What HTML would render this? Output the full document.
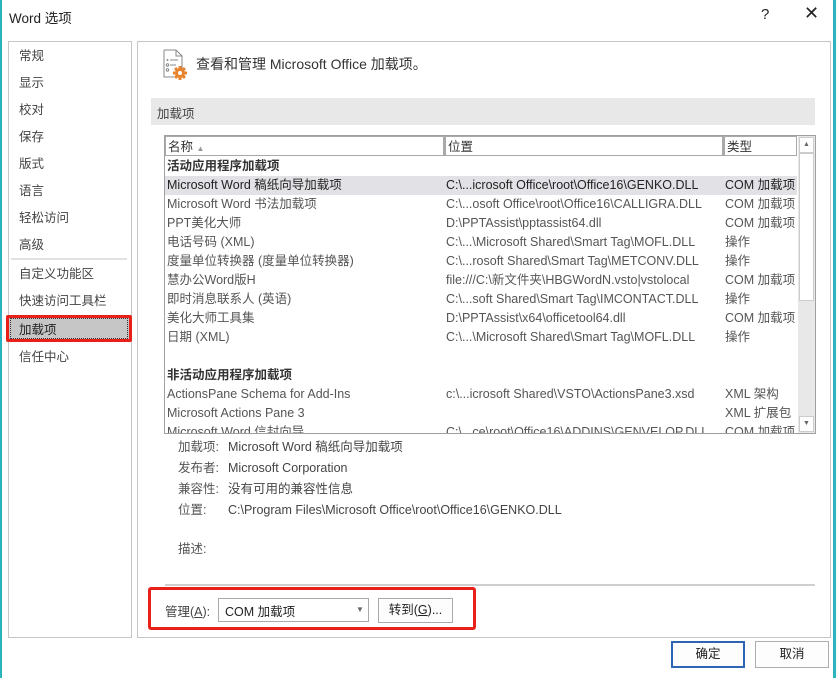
<!DOCTYPE html>
<html><head><meta charset="utf-8"><style>
*{margin:0;padding:0;box-sizing:border-box}
body{width:836px;height:678px;background:#fff;position:relative;overflow:hidden;font-family:"Liberation Sans","Noto Sans CJK SC",sans-serif;font-size:12.5px;color:#444}
.a{position:absolute;white-space:nowrap}
.box{position:absolute;border:1px solid #c6c6c6}
</style></head><body>
<div class="a" style="left:0;top:0;width:2px;height:678px;background:#2bb3c0"></div>
<div class="a" style="left:833px;top:0;width:3px;height:678px;background:#2bb3c0"></div>
<div class="a" style="left:9px;top:7px;font-size:13.5px;color:#222">Word 选项</div>
<div class="a" style="left:761px;top:6px;font-size:15px;color:#222">?</div>
<div class="a" style="left:804px;top:3px;font-size:18px;color:#222">✕</div>

<div class="box" style="left:8px;top:41px;width:124px;height:597px"></div>
<div class="a" style="left:19px;top:43px;line-height:27px;color:#444">常规<br>显示<br>校对<br>保存<br>版式<br>语言<br>轻松访问<br>高级</div>
<div class="a" style="left:11px;top:258px;width:116px;height:2px;background:#e2e2e2"></div>
<div class="a" style="left:19px;top:261px;line-height:27px">自定义功能区<br>快速访问工具栏</div>
<div class="a" style="left:6px;top:315px;width:126px;height:27px;border:3px solid #e8201a;border-radius:2px;background:#c6c6c6"></div>
<div class="a" style="left:10px;top:318px;width:118px;height:21px;border:1px dotted #333"></div>
<div class="a" style="left:19px;top:319px;color:#222">加载项</div>
<div class="a" style="left:19px;top:346px">信任中心</div>

<div class="box" style="left:137px;top:41px;width:694px;height:597px"></div>
<svg class="a" style="left:163px;top:49px" width="24" height="31" viewBox="0 0 24 31">
<path d="M1 1h12l6 6v13M1 1v27h10" fill="none" stroke="#888" stroke-width="1"/>
<path d="M13 1v6h6" fill="none" stroke="#888"/>
<circle cx="4.5" cy="11" r="1" fill="#888"/><path d="M7 11h8" stroke="#888"/>
<circle cx="4.5" cy="16" r="1.2" fill="none" stroke="#888"/><path d="M7 16h6" stroke="#888"/>
<circle cx="4.5" cy="21" r="1.2" fill="none" stroke="#888"/>
<g transform="translate(17,24)" fill="#e8832e"><circle r="5"/><rect x="-1.5" y="-7" width="3" height="14"/><rect x="-7" y="-1.5" width="14" height="3"/><rect x="-1.5" y="-7" width="3" height="14" transform="rotate(45)"/><rect x="-1.5" y="-7" width="3" height="14" transform="rotate(-45)"/><circle r="2" fill="#fff"/></g>
</svg>
<div class="a" style="left:196px;top:54px;font-size:14px;color:#333">查看和管理 Microsoft Office 加载项。</div>
<div class="a" style="left:151px;top:98px;width:664px;height:27px;background:#e8e8e8"></div>
<div class="a" style="left:157px;top:103px;color:#444">加载项</div>

<div class="a" style="left:164px;top:135px;width:652px;height:299px;border:1px solid #a0a0a0"></div>
<div class="a" style="left:165px;top:136px;width:632px;height:20px;background:#a9a9a9"></div>
<div class="a" style="left:166px;top:137px;width:277px;height:18px;background:#fff"></div>
<div class="a" style="left:446px;top:137px;width:276px;height:18px;background:#fff"></div>
<div class="a" style="left:725px;top:137px;width:71px;height:18px;background:#fff"></div>
<div class="a" style="left:168px;top:136px;color:#333">名称 <span style="font-size:8px;color:#999">▲</span></div>
<div class="a" style="left:448px;top:136px;color:#333">位置</div>
<div class="a" style="left:727px;top:136px;color:#333">类型</div>
<div class="a" style="left:798px;top:136px;width:17px;height:297px;background:#e8e8e8"></div>
<div class="a" style="left:799px;top:153px;width:15px;height:148px;background:#fff;border:1px solid #ccc"></div>
<div class="a" style="left:799px;top:137px;width:15px;height:16px;background:#fff;border:1px solid #ccc;font-size:7px;text-align:center;line-height:14px;color:#666">▲</div>
<div class="a" style="left:799px;top:416px;width:15px;height:16px;background:#fff;border:1px solid #ccc;font-size:7px;text-align:center;line-height:14px;color:#666">▼</div>
<div class="a" style="left:165px;top:176px;width:632px;height:19px;background:#e2e2e6"></div>
<div class="a" style="left:165px;top:157px;width:632px;height:276px;overflow:hidden">
<div style="position:absolute;left:2px;top:0;line-height:19px;color:#555">
<b style="color:#333;font-weight:bold">活动应用程序加载项</b><br><span style="color:#222">Microsoft Word 稿纸向导加载项</span><br>Microsoft Word 书法加载项<br>PPT美化大师<br>电话号码 (XML)<br>度量单位转换器 (度量单位转换器)<br>慧办公Word版H<br>即时消息联系人 (英语)<br>美化大师工具集<br>日期 (XML)<br><br><b style="color:#333">非活动应用程序加载项</b><br>ActionsPane Schema for Add-Ins<br>Microsoft Actions Pane 3<br>Microsoft Word 信封向导</div>
<div style="position:absolute;left:281px;top:19px;line-height:19px;color:#555"><span style="color:#222">C:\...icrosoft Office\root\Office16\GENKO.DLL</span><br>C:\...osoft Office\root\Office16\CALLIGRA.DLL<br>D:\PPTAssist\pptassist64.dll<br>C:\...\Microsoft Shared\Smart Tag\MOFL.DLL<br>C:\...rosoft Shared\Smart Tag\METCONV.DLL<br>file:///C:\新文件夹\HBGWordN.vsto|vstolocal<br>C:\...soft Shared\Smart Tag\IMCONTACT.DLL<br>D:\PPTAssist\x64\officetool64.dll<br>C:\...\Microsoft Shared\Smart Tag\MOFL.DLL<br><br><br>c:\...icrosoft Shared\VSTO\ActionsPane3.xsd<br><br>C:\...ce\root\Office16\ADDINS\GENVELOP.DLL</div>
<div style="position:absolute;left:560px;top:19px;line-height:19px;color:#555"><span style="color:#222">COM 加载项</span><br>COM 加载项<br>COM 加载项<br>操作<br>操作<br>COM 加载项<br>操作<br>COM 加载项<br>操作<br><br><br>XML 架构<br>XML 扩展包<br>COM 加载项</div>
</div>

<div class="a" style="left:178px;top:437px;line-height:21px;color:#555">加载项:<br>发布者:<br>兼容性:<br>位置:</div>
<div class="a" style="left:178px;top:538px;color:#555">描述:</div>
<div class="a" style="left:228px;top:437px;line-height:21px;color:#444">Microsoft Word 稿纸向导加载项<br>Microsoft Corporation<br>没有可用的兼容性信息<br>C:\Program Files\Microsoft Office\root\Office16\GENKO.DLL</div>

<div class="a" style="left:165px;top:584px;width:650px;height:2px;background:#cfcfcf"></div>
<div class="a" style="left:148px;top:587px;width:328px;height:43px;border:3px solid #e8201a;border-radius:3px"></div>
<div class="a" style="left:165px;top:601px;color:#444">管理(<u>A</u>):</div>
<div class="a" style="left:218px;top:598px;width:151px;height:24px;border:1px solid #aaa;background:#fff"></div>
<div class="a" style="left:225px;top:601px;color:#222">COM 加载项</div>
<div class="a" style="left:356px;top:605px;font-size:8px;color:#666">▼</div>
<div class="a" style="left:378px;top:598px;width:75px;height:25px;border:1px solid #aaa;background:#fdfdfd;text-align:center;line-height:23px;color:#222">转到(<u>G</u>)...</div>

<div class="a" style="left:671px;top:641px;width:74px;height:27px;border:2px solid #2d64b4;background:#fdfdfd;text-align:center;line-height:23px;color:#222">确定</div>
<div class="a" style="left:755px;top:641px;width:74px;height:27px;border:1px solid #adadad;background:#fdfdfd;text-align:center;line-height:25px;color:#222">取消</div>
</body></html>
